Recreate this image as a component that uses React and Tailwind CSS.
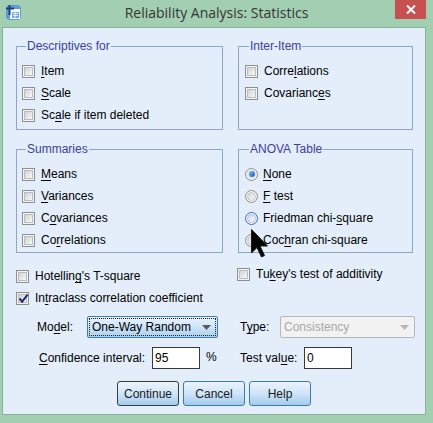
import React from "react";

// mnemonic label: underline the char at index i
function mn(text, i) {
  return (
    <>
      {text.slice(0, i)}
      <span className="underline underline-offset-[2px]">{text[i]}</span>
      {text.slice(i + 1)}
    </>
  );
}

function Box({ checked }) {
  return (
    <span className="relative w-[13px] h-[13px] shrink-0 border border-[#8e8f8f] bg-[#f4f4f4] flex items-center justify-center">
      <span className="w-[9px] h-[9px] border border-[#b9bcc0] bg-linear-to-br from-[#d0d2d5] to-[#f8f8f8]" />
      {checked && (
        <svg className="absolute left-[1px] top-[0px]" width="11" height="11" viewBox="0 0 11 11">
          <path d="M1.5 5.5 L4.2 8.6 L9.6 1.6" fill="none" stroke="#1e2878" strokeWidth="2" />
        </svg>
      )}
    </span>
  );
}

function Radio({ on, hover }) {
  return (
    <span className={`w-[13px] h-[13px] shrink-0 rounded-full border ${hover ? "border-[#3a68cf]" : "border-[#8e8f8f]"} bg-[#f4f4f4] flex items-center justify-center`}>
      {on ? (
        <span className="w-[9px] h-[9px] rounded-full bg-[#e2e3e5] flex items-center justify-center">
          <span className="w-[6px] h-[6px] rounded-full bg-linear-to-br from-[#7bb8f4] to-[#1b5cc0]" />
        </span>
      ) : (
        <span className={`w-[9px] h-[9px] rounded-full border ${hover ? "border-[#a9c4ee]" : "border-[#c2c5c9]"} bg-linear-to-br from-[#d3d5d8] to-[#fbfbfb]`} />
      )}
    </span>
  );
}

function Check({ children, checked, className = "" }) {
  return (
    <div className={`h-[22px] flex items-center gap-[6px] ${className}`}>
      <Box checked={checked} />
      <span>{children}</span>
    </div>
  );
}

function Opt({ children, on, hover }) {
  return (
    <div className="h-[22px] flex items-center gap-[5px]">
      <Radio on={on} hover={hover} />
      <span>{children}</span>
    </div>
  );
}

function Group({ title, className = "", children }) {
  return (
    <fieldset className={`border border-[#8da6ca] shrink-0 ${className}`}>
      <legend className="ml-[4px] px-[1px] leading-[14px] text-[#3d3d9e]">{title}</legend>
      <div className="pt-[7px]">{children}</div>
    </fieldset>
  );
}

function Btn({ children, def }) {
  return (
    <button
      className={`w-[62px] h-[25px] rounded-[3px] border ${def ? "border-[#3a3a3a]" : "border-[#3d7bad]"} bg-linear-to-b from-[#eaf4fd] via-[#cfe5f9] to-[#a3cbee] text-[#1a1a1a] leading-none`}
    >
      {children}
    </button>
  );
}

function Arrow({ color }) {
  return (
    <svg width="9" height="5" viewBox="0 0 9 5">
      <path d="M0 0 H9 L4.5 5 Z" fill={color} />
    </svg>
  );
}

export default function App() {
  return (
    <div
      className="relative w-[433px] h-[423px] bg-[#a2cfb1] overflow-hidden text-[12px] text-black leading-[14px]"
      style={{ fontFamily: '"Liberation Sans", Arial, sans-serif' }}
    >
      {/* title bar */}
      <div className="grid grid-cols-[1fr_auto_1fr] h-[27px]">
        <div className="pl-[5px] pt-[4px]">
          <svg width="17" height="17" viewBox="0 0 17 17">
            <rect x="1" y="1" width="15" height="15" rx="4" fill="#5b9be0" />
            <rect x="5" y="5" width="10" height="10" fill="#ffffff" />
            <rect x="7" y="8" width="7" height="6" fill="#6ea8e6" />
            <path d="M8 9.5 H13 M8 11.5 H13 M10 8 V14" stroke="#ffffff" strokeWidth="0.8" />
            <path d="M4.5 1 V11 M1 4.5 H9" stroke="#1e3f7a" strokeWidth="2" />
          </svg>
        </div>
        <div
          className="text-[14px] leading-[26px] text-[#353535]"
          style={{ fontFamily: '"Open Sans", "Noto Sans", sans-serif' }}
        >
          Reliability Analysis: Statistics
        </div>
        <div className="justify-self-end mr-[7px] w-[31px] h-[19px] bg-[#c75050] flex items-center justify-center">
          <svg width="10" height="9" viewBox="0 0 10 9">
            <path d="M1 0.5 L9 8.5 M9 0.5 L1 8.5" stroke="#ffffff" strokeWidth="2" />
          </svg>
        </div>
      </div>

      {/* client area */}
      <div className="ml-[2px] w-[424px] h-[388px] border border-[#86b295] bg-[#e3eefa]">
        <div className="pl-[13px] pt-[11px]">
          <div className="flex gap-[15px]">
            <Group title="Descriptives for" className="w-[207px] h-[91px] pl-[5px]">
              <Check>{mn("Item", 0)}</Check>
              <Check>{mn("Scale", 0)}</Check>
              <Check>{mn("Scale if item deleted", 2)}</Check>
            </Group>
            <Group title="Inter-Item" className="w-[175px] h-[91px] pl-[6px]">
              <Check>{mn("Correlations", 5)}</Check>
              <Check>{mn("Covariances", 9)}</Check>
            </Group>
          </div>

          <div className="flex gap-[15px] mt-[12px]">
            <Group title="Summaries" className="w-[207px] h-[111px] pl-[5px]">
              <Check>{mn("Means", 0)}</Check>
              <Check>{mn("Variances", 0)}</Check>
              <Check>{mn("Covariances", 1)}</Check>
              <Check>{mn("Correlations", 2)}</Check>
            </Group>
            <Group title="ANOVA Table" className="w-[175px] h-[111px] pl-[6px]">
              <Opt on>{mn("None", 0)}</Opt>
              <Opt>{mn("F test", 0)}</Opt>
              <Opt hover>{mn("Friedman chi-square", 13)}</Opt>
              <Opt>{mn("Cochran chi-square", 3)}</Opt>
            </Group>
          </div>

          <div className="flex items-start mt-[12px]">
            <Check className="w-[221px] gap-[5px]">{mn("Hotelling's T-square", 8)}</Check>
            <Check className="-mt-[2px] gap-[5px]">{mn("Tukey's test of additivity", 2)}</Check>
          </div>
          <Check checked className="gap-[5px]">{mn("Intraclass correlation coefficient", 2)}</Check>

          {/* model / type */}
          <div className="flex items-center mt-[7px] pl-[21px]">
            <span className="w-[50px]">{mn("Model:", 2)}</span>
            <div className="w-[131px] h-[22px] rounded-[2px] border border-[#3c7fb1] bg-linear-to-b from-[#e8f3fd] via-[#cde4f8] to-[#a9cff0] p-[1px]">
              <div className="h-full border border-dotted border-[#222] flex items-center justify-between pl-[2px] pr-[4px]">
                <span>One-Way Random</span>
                <Arrow color="#5a5a5a" />
              </div>
            </div>
            <span className="ml-[22px] w-[40px]">{mn("Type:", 1)}</span>
            <div className="w-[135px] h-[22px] rounded-[2px] border border-[#b4b8bc] bg-[#f2f2f2] flex items-center justify-between pl-[3px] pr-[5px] text-[#a8a8a8]">
              <span>Consistency</span>
              <Arrow color="#b6b6b6" />
            </div>
          </div>

          {/* confidence / test value */}
          <div className="flex items-center mt-[9px] pl-[23px]">
            <span className="w-[113px]">{mn("Confidence interval:", 0)}</span>
            <div className="w-[48px] h-[22px] border border-[#3a3a3a] bg-white flex items-center pl-[2px]">95</div>
            <span className="w-[40px] pl-[6px] mb-[3px]">%</span>
            <span className="w-[64px]">{mn("Test value:", 8)}</span>
            <div className="w-[48px] h-[22px] border border-[#3a3a3a] bg-white flex items-center pl-[2px]">0</div>
          </div>
        </div>

        <div className="flex justify-center gap-[4px] mt-[12px]">
          <Btn def>Continue</Btn>
          <Btn>Cancel</Btn>
          <Btn>Help</Btn>
        </div>
      </div>

      {/* mouse cursor */}
      <svg className="absolute left-[251px] top-[229px]" width="18" height="30" viewBox="0 0 18 30">
        <path d="M0.5 0.5 V24 L6 18.5 L10.5 28 L13.5 26.5 L9 17 L16.5 17 Z" fill="#000000" stroke="#1a1a1a" strokeWidth="1" />
      </svg>
    </div>
  );
}
